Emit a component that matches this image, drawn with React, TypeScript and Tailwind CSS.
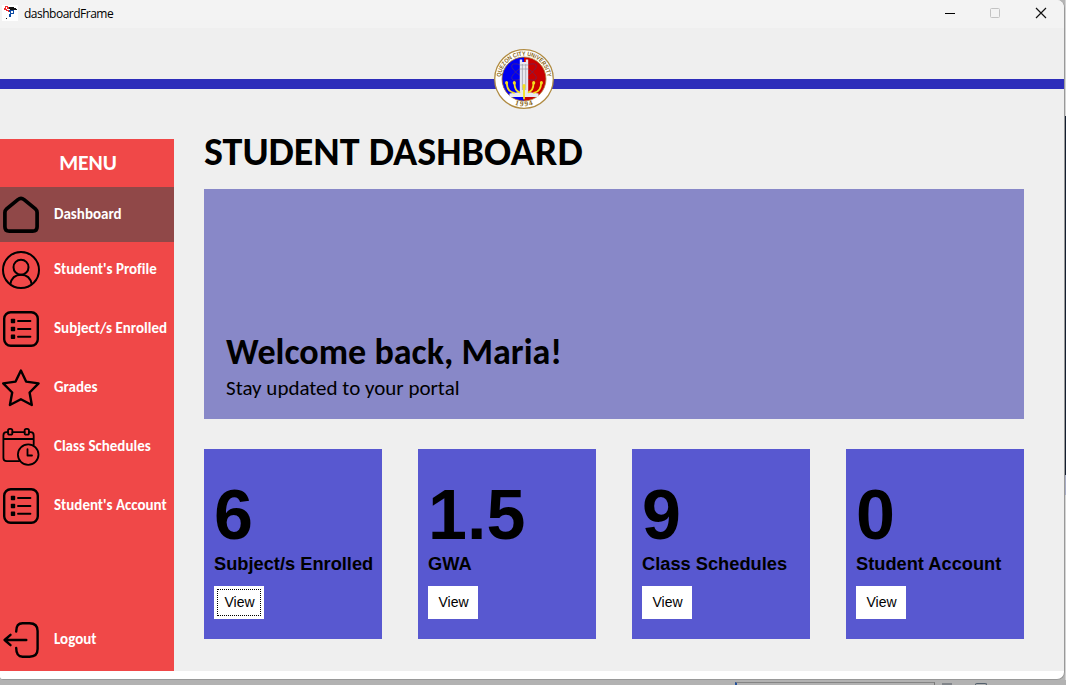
import type { ReactNode } from "react";

const stroke = {
  fill: "none",
  stroke: "#000",
  strokeLinecap: "round" as const,
  strokeLinejoin: "round" as const,
};

function Icon({ width, children }: { width: number; children: ReactNode }) {
  return (
    <svg className="size-[42px] shrink-0" viewBox="0 0 42 42" strokeWidth={width} {...stroke}>
      {children}
    </svg>
  );
}

function HomeIcon() {
  return (
    <Icon width={3.7}>
      <path d="M4.9 18.6Q4.9 16.4 6.6 14.9L17.9 5.6Q21 3.2 24.1 5.6L35.4 14.9Q37.1 16.4 37.1 18.6V32.7Q37.1 37.1 32.7 37.1H9.3Q4.9 37.1 4.9 32.7Z" />
    </Icon>
  );
}

function ProfileIcon() {
  return (
    <Icon width={2}>
      <circle cx="21" cy="21" r="18" />
      <circle cx="21" cy="18.2" r="7.5" />
      <path d="M10.3 35.2C11.4 29.3 15.3 25.7 21 25.7S30.6 29.3 31.7 35.2" />
    </Icon>
  );
}

function ListIcon() {
  return (
    <Icon width={2.4}>
      <rect x="4.2" y="4.2" width="33.6" height="33.6" rx="6.5" />
      {[13, 21, 28.8].map((y) => (
        <g key={y}>
          <rect x="10.8" y={y - 2.2} width="4.4" height="4.4" rx="0.8" fill="#000" stroke="none" />
          <path d={`M18 ${y}H30.4`} strokeWidth={1.9} />
        </g>
      ))}
    </Icon>
  );
}

function StarIcon() {
  return (
    <Icon width={2.4}>
      <path d="M20.9 3.6L26.1 14.6L38.6 16.4L29.6 25.5L31.8 38L20.9 32.2L9.9 38L12.2 25.5L3.2 16.4L15.6 14.6Z" />
    </Icon>
  );
}

function CalendarIcon() {
  return (
    <Icon width={1.8}>
      <path d="M8 6.2H6.5Q3.4 6.2 3.4 9.5V32Q3.4 35.2 6.8 35.2H19M12.4 6.2H24.6M29 6.2H30.6Q33.7 6.2 33.7 9.5V18.5M3.4 13H33.7" />
      <rect x="8" y="2.9" width="4.4" height="5.8" rx="1.8" />
      <rect x="24.6" y="2.9" width="4.4" height="5.8" rx="1.8" />
      <circle cx="28.2" cy="28.6" r="10.3" />
      <path d="M27.5 23.2V29.5H32" />
    </Icon>
  );
}

function LogoutIcon() {
  return (
    <Icon width={2.4}>
      <path d="M16.2 12.5Q16.2 4.3 22.5 4.3H29.5Q37.6 4.3 37.6 12V30Q37.6 37.7 29.5 37.7H22.5Q16.2 37.7 16.2 29M26.3 21H4.6M10.5 15.8L4.6 21L10.5 26.2" />
    </Icon>
  );
}

function MenuItem({ icon, label, active }: { icon: ReactNode; label: string; active?: boolean }) {
  return (
    <a
      className={
        active
          ? "flex h-[55px] w-full items-center gap-3 bg-[#904848]"
          : "flex h-[55px] w-full items-center gap-3"
      }
    >
      {icon}
      <span className="whitespace-nowrap pb-[2px] font-[Carlito,Lato,sans-serif] text-[15px] font-bold leading-5 text-white [font-variant-ligatures:none]">
        {label}
      </span>
    </a>
  );
}

function StatCard({ value, label, focused }: { value: string; label: string; focused?: boolean }) {
  return (
    <section className="flex h-[190px] w-[178px] flex-col items-start bg-[#5858d0] px-[10px] pt-[26px]">
      <div className="h-[77px] text-[70px] font-bold leading-[80px]">{value}</div>
      <h3 className="h-[34px] whitespace-nowrap text-[18.25px] font-bold leading-[24px]">{label}</h3>
      <button className="flex h-[33px] w-[50px] bg-white p-[3px] text-[14px]">
        <span
          className={
            focused
              ? "flex h-full w-full items-center justify-center border border-dotted border-black pl-px"
              : "flex h-full w-full items-center justify-center pl-px"
          }
        >
          View
        </span>
      </button>
    </section>
  );
}

function Seal() {
  return (
    <svg className="absolute left-[494px] top-[21px] size-[60px]" viewBox="0 0 60 60">
      <defs>
        <path id="seal-top" d="M8.1 37.5A23.2 23.2 0 1 1 51.9 37.5" />
        <path id="seal-bottom" d="M12 50.4A27.3 27.3 0 0 0 48 50.4" />
      </defs>
      <circle cx="30" cy="30" r="29.3" fill="#fff" stroke="#b08b42" strokeWidth="1.3" />
      <circle cx="30" cy="30" r="22" fill="#c80000" />
      <path d="M30 8A22 22 0 0 0 30 52Z" fill="#0000f0" />
      <circle cx="30" cy="30" r="22" fill="none" stroke="#b08b42" strokeWidth="0.8" />
      <g fill="none" stroke="#59306c" strokeWidth="0.8" opacity="0.7">
        <ellipse cx="30" cy="23" rx="14" ry="5" transform="rotate(30 30 23)" />
        <ellipse cx="30" cy="23" rx="14" ry="5" transform="rotate(-30 30 23)" />
      </g>
      <path d="M25.8 44V10.5H28.2V13H31.8V10.5H34.2V44Z" fill="#e8e8f0" />
      <path d="M28.4 15V41M31.7 15V41M26 16H34M26 20H34" stroke="#9d9da8" strokeWidth="0.7" />
      <path d="M15.5 44.5L26 43H34L44.5 44.5V48H15.5Z" fill="#e8e8f0" />
      <g fill="none" stroke="#f3df20" strokeWidth="1.8" strokeLinecap="round">
        <path d="M12.8 34Q13 42.5 20 43.8M20.5 34Q20.5 41.5 25.5 43.3M47.2 34Q47 42.5 40 43.8M39.5 34Q39.5 41.5 34.5 43.3M30 37V49.5" />
      </g>
      <g stroke="#f3df20" strokeWidth="3" strokeLinecap="round">
        <path d="M12.6 33.6V34M20.3 33.6V34M39.7 33.6V34M47.4 33.6V34M30 36.5V38" />
      </g>
      <text fill="#8a6820" fontSize="6.2" fontWeight="700" fontFamily="Liberation Sans, sans-serif">
        <textPath href="#seal-top" startOffset="50%" textAnchor="middle" textLength="69" lengthAdjust="spacingAndGlyphs">
          QUEZON CITY UNIVERSITY
        </textPath>
      </text>
      <text fill="#8a6820" fontSize="7.4" fontWeight="700" fontFamily="Liberation Serif, serif" letterSpacing="1.2">
        <textPath href="#seal-bottom" startOffset="51.5%" textAnchor="middle">
          1994
        </textPath>
      </text>
    </svg>
  );
}

function TitleBar() {
  return (
    <div className="flex h-[28px] items-center bg-[#f3f3f3]">
      <svg className="ml-[2px] mt-[-2px] size-4" viewBox="0 0 16 16" shapeRendering="crispEdges">
        <path d="M0 0H16V16H0Z" fill="#fff" />
        <path d="M7 2H12V3H14V5H11V6H8V4H7ZM14 4H15V5H14ZM4 13H5V14H4Z" fill="#111" />
        <path d="M3 1H6V2H7V4H5V5H7V7H6V6H4V5H2V3H3ZM4 2V4H5V2Z" fill="#f02d2d" fillRule="evenodd" />
        <path d="M7 5H12V9H9V12H7V9H8V7H7ZM9 6V8H11V6Z" fill="#0e4ba3" fillRule="evenodd" />
      </svg>
      <span className="ml-[6px] font-['Open_Sans',sans-serif] text-[12px] tracking-[-0.5px]">dashboardFrame</span>
      <svg className="ml-auto h-[28px] w-[140px]" viewBox="0 0 140 28" fill="none">
        <path d="M21 13.5H31" stroke="#000" />
        <rect x="66.5" y="8.5" width="9" height="9" rx="1" stroke="#c3c3c3" />
        <path d="M112 8L122 18M122 8L112 18" stroke="#111" strokeWidth="1.2" />
      </svg>
    </div>
  );
}

export default function App() {
  return (
    <div className="flex h-[685px] w-[1066px] flex-col overflow-hidden bg-[#b5b5b5] font-['Liberation_Sans',sans-serif] text-black">
      <div className="flex h-[680px]">
        <div className="flex w-[1065px] shrink-0 flex-col overflow-hidden rounded-b-lg rounded-tr-lg rounded-bl-[3px] border-b border-r border-[#999] bg-white">
          <TitleBar />
          <header className="relative flex h-[111px] flex-col bg-[#efefef] pt-[51px]">
            <div className="h-[10px] bg-[#2d2dba]" />
            <Seal />
          </header>
          <div className="flex h-[532px] bg-[#efefef]">
            <nav className="flex w-[174px] shrink-0 flex-col bg-[#f04848] pb-[4px]">
              <h2 className="flex h-[48px] items-center justify-center pl-[2px] font-[Carlito,Lato,sans-serif] text-[21.6px] font-bold text-white">
                MENU
              </h2>
              <MenuItem icon={<HomeIcon />} label="Dashboard" active />
              <div className="flex flex-col gap-1">
                <MenuItem icon={<ProfileIcon />} label="Student's Profile" />
                <MenuItem icon={<ListIcon />} label="Subject/s Enrolled" />
                <MenuItem icon={<StarIcon />} label="Grades" />
                <MenuItem icon={<CalendarIcon />} label="Class Schedules" />
                <MenuItem icon={<ListIcon />} label="Student's Account" />
              </div>
              <div className="mt-auto">
                <MenuItem icon={<LogoutIcon />} label="Logout" />
              </div>
            </nav>
            <main className="ml-[30px] w-[820px]">
              <h1 className="h-[50px] whitespace-nowrap font-[Carlito,Lato,sans-serif] text-[40.1px] font-bold leading-[26px]">
                STUDENT DASHBOARD
              </h1>
              <section className="flex h-[230px] flex-col justify-end bg-[#8888c8] pb-[16px] pl-[22px] font-[Carlito,Lato,sans-serif]">
                <h2 className="text-[36.1px] font-bold leading-[42px]">Welcome back, Maria!</h2>
                <p className="text-[21px] leading-[30px] [font-variant-ligatures:none]">Stay updated to your portal</p>
              </section>
              <div className="mt-[30px] flex gap-9">
                <StatCard value="6" label="Subject/s Enrolled" focused />
                <StatCard value="1.5" label="GWA" />
                <StatCard value="9" label="Class Schedules" />
                <StatCard value="0" label="Student Account" />
              </div>
            </main>
          </div>
        </div>
        <div className="flex flex-1 flex-col bg-[#d4d4d4]">
          <div className="mt-[116px] h-[359px] bg-[#141e30]" />
          <div className="h-[20px] bg-[#a8adc5]" />
        </div>
      </div>
      <div className="flex h-[5px] items-end bg-[#b2b2b2]">
        <div className="ml-[735px] h-[3px] w-[200px] border-l-2 border-r border-t border-l-[#24529b] border-r-[#777] border-t-[#858585]" />
        <div className="ml-[7px] h-[2px] w-[10px] bg-[#81858a]" />
        <div className="ml-[23px] h-[2px] w-[12px] rounded-t border-x border-t border-[#53606c]" />
      </div>
    </div>
  );
}
